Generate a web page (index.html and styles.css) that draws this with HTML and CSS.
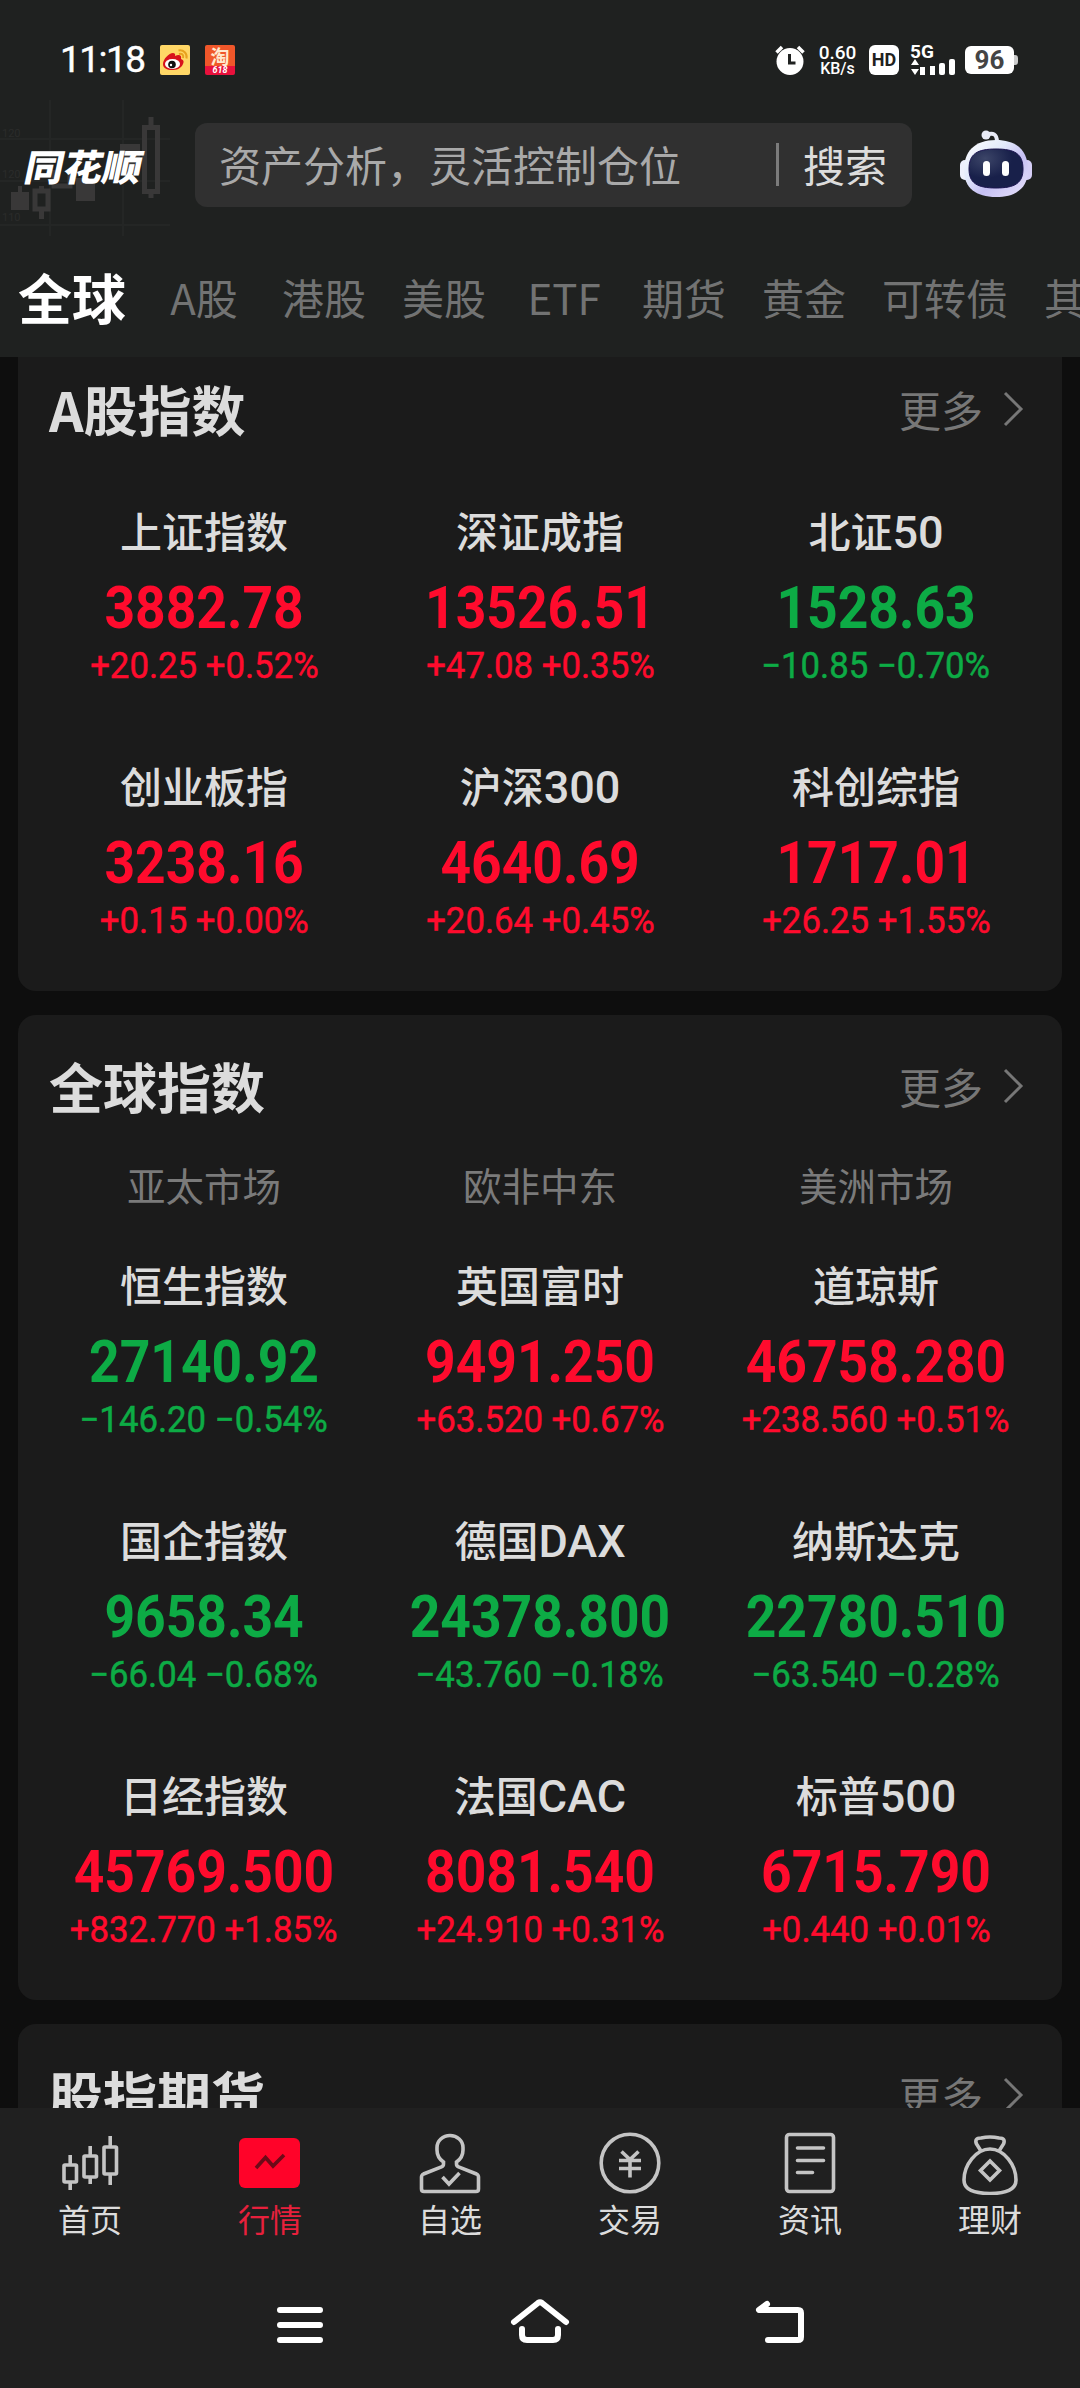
FILE: index.html
```html
<!DOCTYPE html>
<html lang="zh-CN">
<head>
<meta charset="utf-8">
<title>行情</title>
<link rel="stylesheet" href="styles.css">
</head>
<body>
<div class="app">
  <header class="header">
    <svg class="backdrop" viewBox="0 0 180 140" fill="none">
      <g stroke="#242625" stroke-width="2"><path d="M0 39H170M0 81H170M0 125H170M50 0V136M123 0V136"/></g>
      <g fill="#393838"><rect x="11" y="92" width="18" height="18"/><rect x="18" y="86" width="4" height="7"/><rect x="76" y="78" width="19" height="23"/><rect x="120" y="44" width="20" height="30"/></g>
      <g stroke="#393838" stroke-width="5"><rect x="35" y="91" width="13" height="18"/><path d="M41.500 86V91M41.500 110V119M151 17V26M151 93V98M54 70V86H70V74"/><rect x="144.500" y="27.500" width="13" height="64"/></g>
      <g class="scale"><text x="2" y="37">120</text><text x="2" y="78">120</text><text x="2" y="121">110</text></g>
    </svg>
    <div class="status">
      <span class="clock">11:18</span>
      <svg class="app-icon" viewBox="0 0 30 30"><rect width="30" height="30" rx="2" fill="#ffd766"/><path d="M3 19C3 14 9 8 13 8c3 0 2 3 2 3 4-2 7-1 6 3 3 1 3 3 2 5-2 5-7 6-11 6-5 0-9-2-9-6z" fill="#d8121c"/><ellipse cx="12.500" cy="19" rx="7.500" ry="5" fill="#fff"/><circle cx="12" cy="19.500" r="3.800" fill="#111"/><circle cx="11" cy="20" r="1.200" fill="#fff"/><path d="M19 9c3-1 5 1 4 4M18.500 5.500c5-1 9 3 8 8" fill="none" stroke="#e8a21e" stroke-width="2"/></svg>
      <div class="taobao"><b>淘</b><i>618</i></div>
      <div class="status-right">
        <svg width="30" height="30" viewBox="0 0 30 30"><circle cx="15" cy="16.500" r="13.500" fill="#fff"/><path d="M1.500 7.500L7 2M28.500 7.500L23 2" stroke="#fff" stroke-width="3.500"/><path d="M14.500 9V18H20.500" fill="none" stroke="#1f2120" stroke-width="3"/></svg>
        <div class="speed"><b>0.60</b><span>KB/s</span></div>
        <div class="hd">HD</div>
        <div class="signal"><b>5G</b><svg width="46" height="16" viewBox="0 0 46 16" fill="#fff"><path d="M1 6L5 0L9 6zM1 10H9L5 16zM10 8h5v8h-5zM20 7h5v9h-5z"/><rect x="29" y="4" width="6" height="12" rx="2"/><rect x="39" y="0" width="6" height="16" rx="2"/></svg></div>
        <div class="battery">96</div>
      </div>
    </div>
    <div class="top">
      <div class="logo"><span>同花顺</span></div>
      <div class="search"><span class="hint">资产分析，灵活控制仓位</span><span class="divider"></span><span class="go">搜索</span></div>
      <svg class="robot" viewBox="0 0 72 68"><defs><linearGradient id="shell" x1="0" y1="0" x2="1" y2="1"><stop offset="0" stop-color="#fff"/><stop offset=".35" stop-color="#e3eafb"/><stop offset=".6" stop-color="#c5bff3"/><stop offset="1" stop-color="#e9e4fb"/></linearGradient><radialGradient id="face" cx=".3" cy=".25"><stop offset="0" stop-color="#3c4568"/><stop offset="1" stop-color="#18204a"/></radialGradient></defs><path d="M26 5C33 2 37 4 37 12" fill="none" stroke="#e8eaf6" stroke-width="4"/><circle cx="26" cy="5" r="4.500" fill="#e8eaf6"/><rect x="0" y="30" width="12" height="20" rx="5" fill="#eef0fc"/><rect x="60" y="30" width="12" height="20" rx="5" fill="#d5cef6"/><path d="M36 10C58 10 68 22 68 40C68 58 56 67 36 67S4 58 4 40C4 22 14 10 36 10z" fill="url(#shell)"/><path d="M36 19C55 19 63 24 63 39C63 53 55 58 36 58S9 53 9 39C9 24 17 19 36 19z" fill="url(#face)" stroke="#1b1450" stroke-width="1"/><rect x="23" y="31" width="7" height="15" rx="3.500" fill="#fff"/><rect x="42" y="31" width="7" height="15" rx="3.500" fill="#fff"/></svg>
    </div>
    <nav class="tabs"><span class="active">全球</span><span>A股</span><span>港股</span><span>美股</span><span>ETF</span><span>期货</span><span>黄金</span><span>可转债</span><span>其他</span></nav>
  </header>

  <main class="content">
    <section class="card first">
      <div class="card-head"><h2>A股指数</h2><a class="more">更多<svg viewBox="0 0 22 36"><path d="M2 2L18 18L2 34"/></svg></a></div>
      <div class="grid">
        <div class="quote up"><h3>上证指数</h3><strong>3882.78</strong><p>+20.25 +0.52%</p></div>
        <div class="quote up"><h3>深证成指</h3><strong>13526.51</strong><p>+47.08 +0.35%</p></div>
        <div class="quote down"><h3>北证<span>50</span></h3><strong>1528.63</strong><p>−10.85 −0.70%</p></div>
        <div class="quote up"><h3>创业板指</h3><strong>3238.16</strong><p>+0.15 +0.00%</p></div>
        <div class="quote up"><h3>沪深<span>300</span></h3><strong>4640.69</strong><p>+20.64 +0.45%</p></div>
        <div class="quote up"><h3>科创综指</h3><strong>1717.01</strong><p>+26.25 +1.55%</p></div>
      </div>
    </section>
    <section class="card global">
      <div class="card-head"><h2>全球指数</h2><a class="more">更多<svg viewBox="0 0 22 36"><path d="M2 2L18 18L2 34"/></svg></a></div>
      <div class="markets"><span>亚太市场</span><span>欧非中东</span><span>美洲市场</span></div>
      <div class="grid">
        <div class="quote down"><h3>恒生指数</h3><strong>27140.92</strong><p>−146.20 −0.54%</p></div>
        <div class="quote up"><h3>英国富时</h3><strong>9491.250</strong><p>+63.520 +0.67%</p></div>
        <div class="quote up"><h3>道琼斯</h3><strong>46758.280</strong><p>+238.560 +0.51%</p></div>
        <div class="quote down"><h3>国企指数</h3><strong>9658.34</strong><p>−66.04 −0.68%</p></div>
        <div class="quote down"><h3>德国<span>DAX</span></h3><strong>24378.800</strong><p>−43.760 −0.18%</p></div>
        <div class="quote down"><h3>纳斯达克</h3><strong>22780.510</strong><p>−63.540 −0.28%</p></div>
        <div class="quote up"><h3>日经指数</h3><strong>45769.500</strong><p>+832.770 +1.85%</p></div>
        <div class="quote up"><h3>法国<span>CAC</span></h3><strong>8081.540</strong><p>+24.910 +0.31%</p></div>
        <div class="quote up"><h3>标普<span>500</span></h3><strong>6715.790</strong><p>+0.440 +0.01%</p></div>
      </div>
    </section>
    <section class="card futures">
      <div class="card-head"><h2>股指期货</h2><a class="more">更多<svg viewBox="0 0 22 36"><path d="M2 2L18 18L2 34"/></svg></a></div>
    </section>
  </main>

  <footer class="footer">
    <nav class="tabbar">
      <a><svg viewBox="0 0 64 64"><rect x="6" y="34" width="12.500" height="17" rx="1"/><rect x="26" y="25" width="12.500" height="21" rx="1"/><rect x="46" y="16" width="12.500" height="27" rx="1"/><path d="M12.200 24V34M12.200 51V59M32.200 15V25M32.200 46V53M52.200 5V16M52.200 43V54"/></svg>首页</a>
      <a class="current"><svg viewBox="0 0 64 64"><rect x="1" y="7" width="61" height="50" rx="6" fill="#ff0329" stroke="none"/><path d="M18 37L27.500 26.500L35 35L46 24" stroke="#6d0a18" stroke-width="3.600"/></svg>行情</a>
      <a><svg viewBox="0 0 64 64"><path d="M25.500 31V33Q25.500 35 23.500 35.800L5.500 43Q3.500 44 3.500 46V58Q3.500 60.500 6 60.500H58Q60.500 60.500 60.500 58V46Q60.500 44 58.500 43L40.500 35.800Q38.500 35 38.500 33V31C43 28 45 24 45 19V16.500A13 12 0 0 0 19 16.500V19C19 24 21 28 25.500 31z"/><path d="M24.500 46L31 53L41.500 42"/></svg>自选</a>
      <a><svg viewBox="0 0 64 64"><circle cx="32" cy="32" r="28.800"/><path d="M23.500 20.500L32 28.500L40.500 20.500M21 29.500H43M21 37.500H43M32 29V46.500"/></svg>交易</a>
      <a><svg viewBox="0 0 64 64"><rect x="8.500" y="3.500" width="47" height="57" rx="3"/><path d="M19.500 17H45.500M19.500 29.500H45.500M19.500 41.500H34.500" stroke-linecap="round"/></svg>资讯</a>
      <a><svg viewBox="0 0 64 64"><path d="M23 20L18.500 13Q16 7 23 7Q32 5 41 7Q48 7 45.500 13L41 20"/><path d="M32 18C46 18 58 34 58 49C58 59 48 62.500 32 62.500S6 59 6 49C6 34 18 18 32 18z"/><path d="M32 30L41.500 39.500L32 49L22.500 39.500z"/></svg>理财</a>
    </nav>
    <div class="system">
      <svg viewBox="0 0 60 50"><path d="M10 14H50M10 29H50M10 44H50"/></svg>
      <svg viewBox="0 0 60 50"><path d="M4 26L28 7Q30 5.500 32 7L56 26M12 33V39Q12 44 17 44H43Q48 44 48 39V33"/></svg>
      <svg viewBox="0 0 60 50"><path d="M17 8L9 14H48Q51 14 51 17V41Q51 44 48 44H18"/></svg>
    </div>
  </footer>
</div>
</body>
</html>
```

FILE: styles.css
```css
* { box-sizing: border-box; }
body { margin: 0; background: #0e0e0e; font-family: "Noto Sans CJK SC", sans-serif; color: #dcdcdc; }
h2, h3, p { margin: 0; font-weight: inherit; }
.app { width: 1080px; height: 2388px; overflow: hidden; display: flex; flex-direction: column; }

.header { position: relative; height: 357px; flex: none; background: #1f2120; overflow: hidden; }
.backdrop { position: absolute; left: 0; top: 100px; width: 180px; height: 140px; }
.scale text { font: 11px Roboto, sans-serif; fill: #2b2c2b; }
.status { height: 120px; padding: 0 60px; display: flex; align-items: center; color: #fff; }
.clock { font: 400 37px/40px Roboto, sans-serif; letter-spacing: -1.5px; width: 100px; -webkit-text-stroke: .4px #fff; }
.app-icon { width: 30px; height: 30px; margin-right: 15px; }
.taobao { width: 30px; height: 30px; border-radius: 2px; background: linear-gradient(#f0572a 21px, #e8113c 21px); display: flex; flex-direction: column; align-items: center; }
.taobao b { font-size: 19px; line-height: 21px; color: #ffe9cf; }
.taobao i { font: italic bold 9px/9px Roboto, sans-serif; }
.status-right { margin-left: auto; display: flex; align-items: center; }
.speed { width: 39px; margin: 0 12px 0 13px; display: flex; flex-direction: column; align-items: center; font: 500 19px/16px Roboto, sans-serif; }
.speed b { font-weight: 500; }
.speed span { font-size: 16px; line-height: 15px; }
.hd { width: 30px; height: 30px; border-radius: 6px; background: #fff; color: #1f2120; font: bold 18px/30px Roboto, sans-serif; text-align: center; }
.signal { margin: 0 9px 0 11px; width: 46px; height: 30px; display: flex; flex-direction: column; }
.signal b { font: bold 19px/14px Roboto, sans-serif; }
.signal svg { display: block; }
.battery { position: relative; width: 49px; height: 28px; margin-right: 6px; border-radius: 6px; background: #fff; color: #444; font: bold 26px/28px Roboto, sans-serif; text-align: center; }
.battery::after { content: ""; position: absolute; right: -4px; top: 9px; width: 4px; height: 10px; border-radius: 0 3px 3px 0; background: #ccc; }

.top { position: relative; height: 90px; display: flex; align-items: center; padding: 0 48px 0 26px; }
.logo { width: 169px; font-size: 39px; font-weight: 900; line-height: 56px; color: #fff; }
.logo span { display: inline-block; transform: skewX(-12deg) scaleY(.94); }
.search { width: 717px; height: 84px; border-radius: 12px; background: #303030; display: flex; align-items: center; padding: 0 25px 2px 24px; font-size: 42px; line-height: 60px; }
.hint { color: #a9a9a9; white-space: nowrap; }
.divider { width: 3px; height: 43px; background: #7b7b7b; margin-left: auto; }
.go { margin-left: 24px; color: #dcdcdc; }
.robot { width: 72px; height: 68px; margin: -3px 0 0 auto; }

.tabs { display: flex; align-items: center; gap: 36px; height: 84px; margin-top: 45px; padding-left: 18px; color: #727373; font-size: 42px; line-height: 60px; white-space: nowrap; }
.tabs span { flex: none; min-width: 84px; text-align: center; }
.tabs .active { font-size: 54px; font-weight: 700; color: #fff; }

.content { height: 1751px; flex: none; overflow: hidden; padding: 0 18px; }
.card { background: #1b1b1b; border-radius: 18px; margin-bottom: 24px; overflow: hidden; }
.first { height: 634px; border-radius: 0 0 18px 18px; padding-top: 22px; }
.global { height: 985px; padding-top: 41px; }
.futures { height: 300px; padding-top: 41px; }
.card-head { height: 60px; padding: 0 37px 0 31px; display: flex; align-items: center; justify-content: space-between; }
.card-head h2 { font-size: 54px; line-height: 60px; font-weight: 700; }
.more { display: flex; align-items: center; font-size: 42px; line-height: 60px; color: #777; }
.more svg { width: 22px; height: 36px; margin-left: 20px; fill: none; stroke: #777; stroke-width: 3; }
.grid, .markets { display: grid; grid-template-columns: repeat(3, 336px); justify-content: center; text-align: center; }
.grid { margin-top: 61px; grid-auto-rows: 255px; }
.markets { margin-top: 38px; height: 60px; font-size: 38.5px; line-height: 60px; color: #7a7a7a; }
.markets + .grid { margin-top: 40px; }
.quote { display: flex; flex-direction: column; align-items: center; white-space: nowrap; }
.quote h3 { font-size: 42px; line-height: 60px; font-weight: 500; }
.quote h3 span { font-family: Roboto, sans-serif; font-size: 45px; line-height: 1; }
.quote strong { font: 700 59px/70px Roboto, sans-serif; margin-top: 13px; transform: scaleX(.905); }
.quote p { font: 400 36px/44px Roboto, sans-serif; margin-top: 1px; transform: scaleX(.965); -webkit-text-stroke: .5px currentColor; }
.up strong, .up p { color: #ff0b2d; }
.down strong, .down p { color: #0dab45; }

.footer { flex: 1; background: #202020; }
.tabbar { display: grid; grid-template-columns: repeat(6, 1fr); padding-top: 23px; height: 180px; }
.tabbar a { display: flex; flex-direction: column; align-items: center; font-size: 32px; line-height: 48px; }
.tabbar svg { width: 64px; height: 64px; margin-bottom: -1px; fill: none; stroke: #c4c4c4; stroke-width: 3.6; }
.tabbar .current { color: #e8203c; }
.system { display: flex; justify-content: center; gap: 180px; padding-top: 8px; }
.system svg { width: 60px; height: 50px; fill: none; stroke: #fff; stroke-width: 6; stroke-linecap: round; stroke-linejoin: round; }
```
